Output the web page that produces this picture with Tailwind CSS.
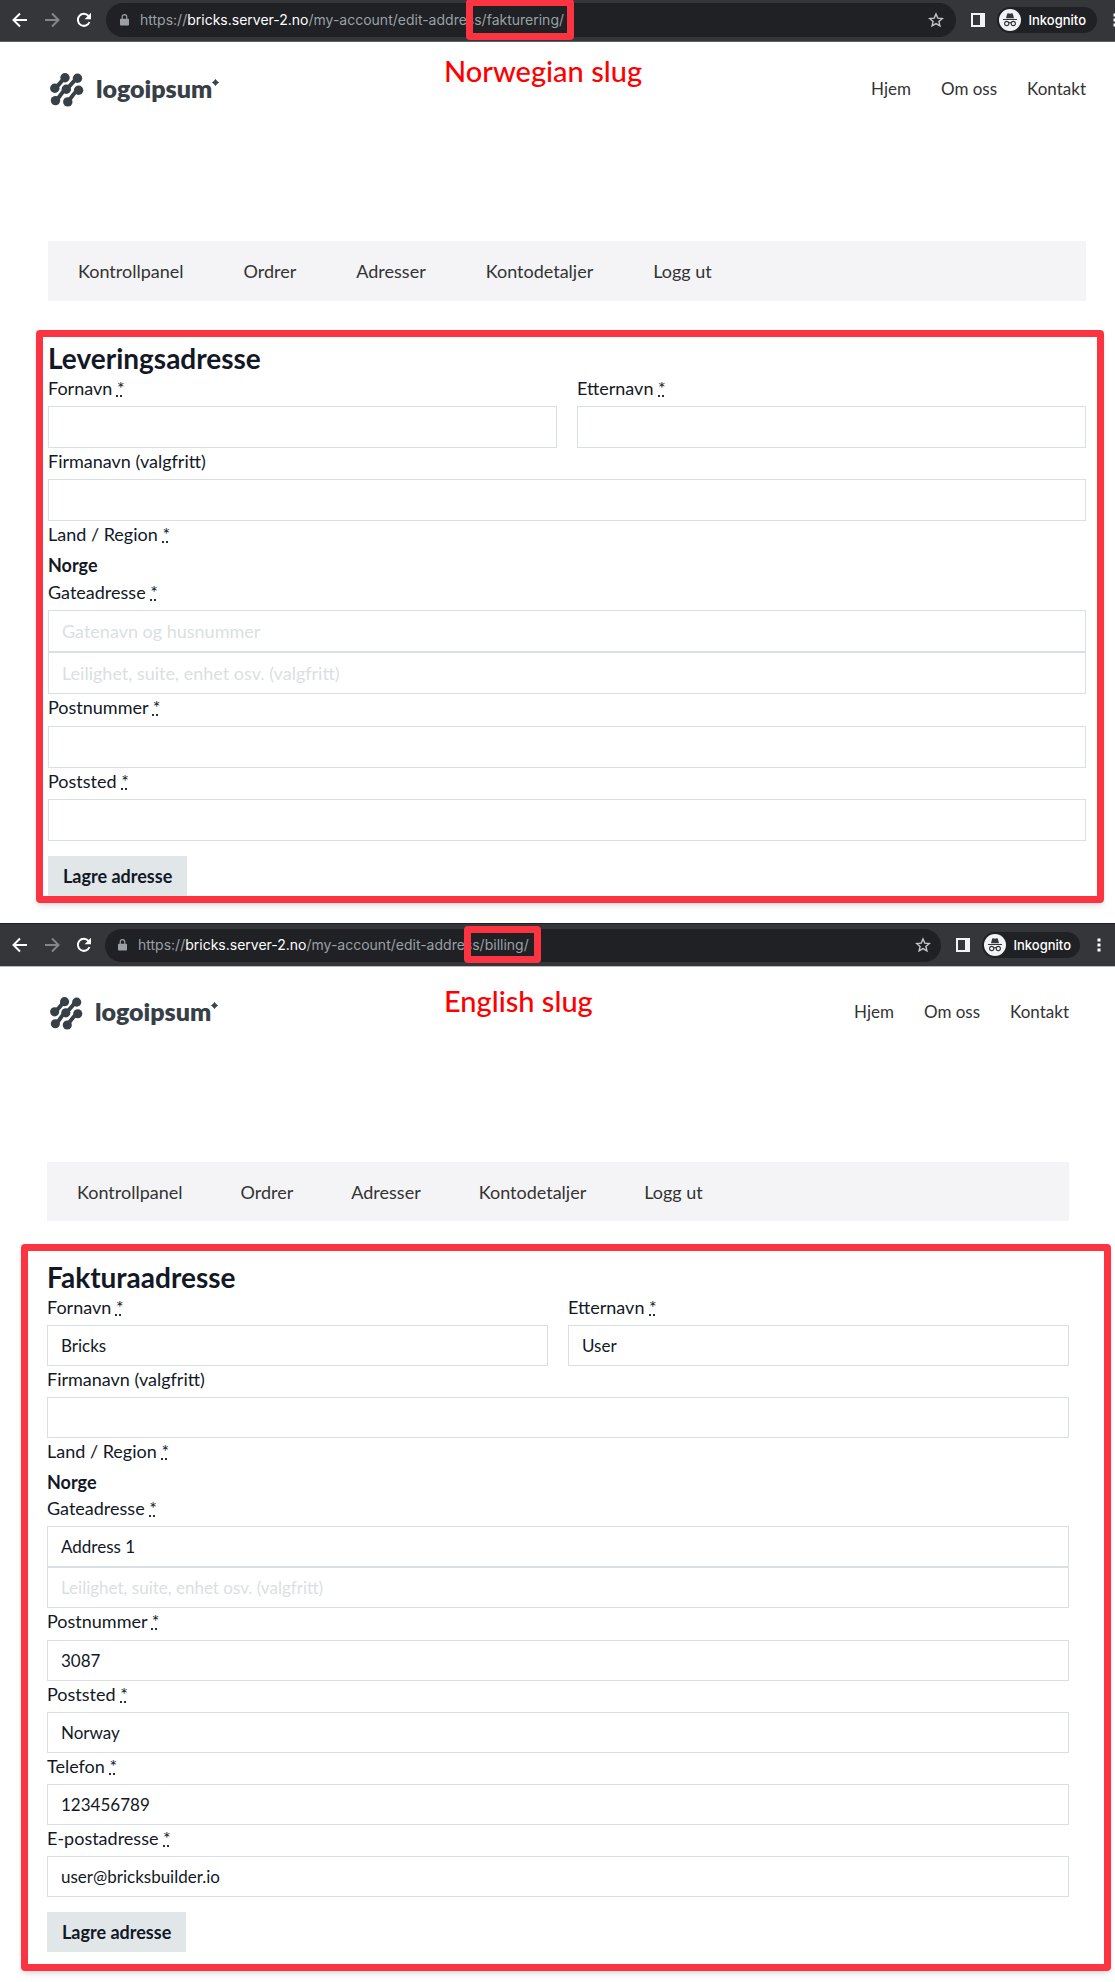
<!DOCTYPE html>
<html lang="nb">
  <head>
    <meta charset="utf-8" />
    <meta name="viewport" content="width=device-width, initial-scale=1.0" />
    <title>Edit address slugs</title>
    <script src="https://cdn.jsdelivr.net/npm/@tailwindcss/browser@4"></script>
  </head>
  <body class="overflow-x-hidden bg-white font-[Lato,sans-serif] text-[17px] leading-6 text-[#121826]">
    <!-- Shared icons -->
    <svg class="hidden">
      <symbol id="back" viewBox="0 0 16 16"><path d="M15 8H2M8 1.5 1.5 8 8 14.5" fill="none" stroke="currentColor" stroke-width="2" /></symbol>
      <symbol id="forward" viewBox="0 0 16 16"><path d="M1 8h13M8 1.5 14.500 8 8 14.500" fill="none" stroke="currentColor" stroke-width="2" /></symbol>
      <symbol id="reload" viewBox="0 0 16 16"><path d="M13.500 10A6 6 0 1 1 12.500 4" fill="none" stroke="currentColor" stroke-width="2" /><path d="M15 .8v6.400H8.600z" fill="currentColor" /></symbol>
      <symbol id="lock" viewBox="0 0 10 14"><path d="M1 5.500h8a1 1 0 0 1 1 1V12a1 1 0 0 1-1 1H1a1 1 0 0 1-1-1V6.500a1 1 0 0 1 1-1z" fill="currentColor" /><path d="M2.500 6V3.500a2.500 2.500 0 0 1 5 0V6" fill="none" stroke="currentColor" stroke-width="1.300" /></symbol>
      <symbol id="star" viewBox="0 0 16 16"><path d="m8 2 1.800 4.100 4.500.4-3.400 3 1 4.400L8 11.600l-3.900 2.300 1-4.400-3.400-3 4.500-.4z" fill="none" stroke="currentColor" stroke-width="1.400" /></symbol>
      <symbol id="panel" viewBox="0 0 14 14"><path fill-rule="evenodd" d="M0 0h14v14H0zM2 2v10h7V2z" fill="currentColor" /></symbol>
      <symbol id="incognito" viewBox="0 0 22 22">
        <circle cx="11" cy="11" r="11" fill="#f1f3f4" />
        <path d="M7 9.300 8.100 5q.3-.9 1.200-.7l1.700.4 1.700-.4q.9-.2 1.200.7L15 9.300z" fill="#35363a" />
        <path d="M4 10.500h14M9.700 14q1.300-.8 2.600 0" fill="none" stroke="#35363a" stroke-width="1.100" />
        <circle cx="7.700" cy="14.500" r="2.100" fill="none" stroke="#35363a" stroke-width="1.100" />
        <circle cx="14.300" cy="14.500" r="2.100" fill="none" stroke="#35363a" stroke-width="1.100" />
      </symbol>
      <symbol id="dots" viewBox="0 0 4 14"><path d="M.5.500h3v3h-3zM.5 5.500h3v3h-3zM.5 10.500h3v3h-3z" fill="currentColor" /></symbol>
      <symbol id="logo" viewBox="0 0 34 34">
        <path d="M14.700 4.800C11 8 9 13 4.800 15M27 5.300C23 8 20 14 16 16c-4 2-6 9-10.500 11.500M28.500 17c-5 2-7 9-11 11.500" fill="none" stroke="currentColor" stroke-width="4" />
        <g fill="currentColor">
          <circle cx="15" cy="4.800" r="4.700" /><circle cx="27.500" cy="5.300" r="4.700" />
          <circle cx="4.800" cy="15.300" r="4.700" /><circle cx="16.300" cy="16.300" r="4.700" /><circle cx="28.600" cy="17.200" r="4.700" />
          <circle cx="5.500" cy="27.600" r="4.700" /><circle cx="17.800" cy="28.900" r="4.700" />
        </g>
      </symbol>
      <symbol id="spark" viewBox="0 0 8 8"><path d="M4 .5Q5 3 7.500 4 5 5 4 7.500 3 5 .5 4 3 3 4 .5z" fill="currentColor" stroke="currentColor" /></symbol>
    </svg>

    <!-- Norwegian slug -->
    <section class="pb-5">
      <div class="flex h-[42px] items-center overflow-hidden border-b border-[#5f6063] bg-[#35363a] pb-[2px] pl-3 font-[Inter,sans-serif] text-white">
        <button aria-label="Back" class="mr-4"><svg class="size-4"><use href="#back" /></svg></button>
        <button aria-label="Forward" class="mr-4 text-[#85868a]"><svg class="size-4"><use href="#forward" /></svg></button>
        <button aria-label="Reload" class="mr-[14px]"><svg class="size-4"><use href="#reload" /></svg></button>
        <div class="flex h-[34px] grow items-center rounded-full bg-[#202124] pr-3 pl-[14px] text-sm text-[#9aa0a6]">
          <svg class="mr-[11px] h-[14px] w-[9px]"><use href="#lock" /></svg>
          <span>https://<span class="text-white">bricks.server-2.no</span>/my-account/edit-addres<span class="relative">s/fakturering/<span class="absolute -top-3 -right-[10px] -bottom-3 -left-2 rounded-sm border-[7px] border-[#fc3441]"></span></span></span>
          <button aria-label="Bookmark" class="ml-auto text-[#c4c7ca]"><svg class="size-4"><use href="#star" /></svg></button>
        </div>
        <button aria-label="Side panel" class="ml-[15px] text-[#f1f3f4]"><svg class="size-[14px]"><use href="#panel" /></svg></button>
        <button class="ml-3 flex h-[26px] items-center gap-2 rounded-full bg-[#202124] pr-[11px] pl-[2px] text-[13px] font-medium"><svg class="size-[22px]"><use href="#incognito" /></svg>Inkognito</button>
        <button aria-label="Menu" class="-mr-[2px] ml-4"><svg class="h-[14px] w-1"><use href="#dots" /></svg></button>
      </div>

      <header class="relative flex h-[199px] items-start justify-between pt-[31px] pr-[29px] pl-[50px] text-[#333]">
        <a href="#" class="flex items-center text-[#374047]">
          <svg class="mr-3 size-[34px]"><use href="#logo" /></svg>
          <span class="mb-1 text-[25px] leading-[30px] font-extrabold">logoipsum</span>
          <svg class="mb-4 size-[7px]"><use href="#spark" /></svg>
        </a>
        <p class="absolute top-[11px] left-[444px] text-[29px] leading-9 font-medium text-[#ff0000]">Norwegian slug</p>
        <nav class="flex gap-[30px] pt-1">
          <a href="#">Hjem</a>
          <a href="#">Om oss</a>
          <a href="#">Kontakt</a>
        </nav>
      </header>

      <nav class="mr-[29px] ml-12 flex h-[60px] items-center gap-[60px] bg-[#f4f4f6] px-[30px] text-lg text-[#333]">
        <a href="#">Kontrollpanel</a>
        <a href="#">Ordrer</a>
        <a href="#">Adresser</a>
        <a href="#">Kontodetaljer</a>
        <a href="#">Logg ut</a>
      </nav>

      <form class="mt-[29px] mr-[11px] ml-9 rounded-sm border-[7px] border-[#fc3441] pt-1 pr-[11px] pl-[5px] text-lg leading-[26px] shadow-md">
        <h2 class="text-[28px] leading-[34px] font-bold">Leveringsadresse</h2>
        <div class="grid grid-cols-2 gap-5">
          <div>
            <label for="s-first" class="block h-[31px]">Fornavn <abbr title="påkrevd">*</abbr></label>
            <input id="s-first" type="text" class="block h-[42px] w-full border border-[#dadfe1] px-[13px]" />
          </div>
          <div>
            <label for="s-last" class="block h-[31px]">Etternavn <abbr title="påkrevd">*</abbr></label>
            <input id="s-last" type="text" class="block h-[42px] w-full border border-[#dadfe1] px-[13px]" />
          </div>
        </div>
        <label for="s-company" class="block h-[31px]">Firmanavn (valgfritt)</label>
        <input id="s-company" type="text" class="block h-[42px] w-full border border-[#dadfe1] px-[13px]" />
        <p class="h-[31px]">Land / Region <abbr title="påkrevd">*</abbr></p>
        <strong class="block h-[27px]">Norge</strong>
        <label for="s-street" class="block h-[31px]">Gateadresse <abbr title="påkrevd">*</abbr></label>
        <input id="s-street" type="text" placeholder="Gatenavn og husnummer" class="block h-[42px] w-full border border-[#dadfe1] px-[13px] placeholder:text-[#dadfe1]" />
        <input type="text" aria-label="Leilighet" placeholder="Leilighet, suite, enhet osv. (valgfritt)" class="block h-[42px] w-full border border-[#dadfe1] px-[13px] placeholder:text-[#dadfe1]" />
        <label for="s-zip" class="block h-8">Postnummer <abbr title="påkrevd">*</abbr></label>
        <input id="s-zip" type="text" class="block h-[42px] w-full border border-[#dadfe1] px-[13px]" />
        <label for="s-city" class="block h-[31px]">Poststed <abbr title="påkrevd">*</abbr></label>
        <input id="s-city" type="text" class="block h-[42px] w-full border border-[#dadfe1] px-[13px]" />
        <button type="button" class="mt-[15px] block h-10 bg-[#e1e6e9] px-[15px] font-bold">Lagre adresse</button>
      </form>
    </section>

    <!-- English slug -->
    <section class="pb-3">
      <div class="flex h-11 items-center overflow-hidden border-t border-b border-t-[#202124] border-b-[#b9babc] bg-[#35363a] pr-[14px] pl-3 font-[Inter,sans-serif] text-white">
        <button aria-label="Back" class="mr-4"><svg class="size-4"><use href="#back" /></svg></button>
        <button aria-label="Forward" class="mr-4 text-[#85868a]"><svg class="size-4"><use href="#forward" /></svg></button>
        <button aria-label="Reload" class="mr-[13px]"><svg class="size-4"><use href="#reload" /></svg></button>
        <div class="flex h-[33px] grow items-center rounded-full bg-[#202124] pr-[10px] pl-[13px] text-sm text-[#9aa0a6]">
          <svg class="mr-[11px] h-[14px] w-[9px]"><use href="#lock" /></svg>
          <span>https://<span class="text-white">bricks.server-2.no</span>/my-account/edit-addres<span class="relative">s/billing/<span class="absolute -top-[10px] -right-3 -bottom-[10px] -left-2 rounded-sm border-[7px] border-[#fc3441]"></span></span></span>
          <button aria-label="Bookmark" class="ml-auto text-[#c4c7ca]"><svg class="size-4"><use href="#star" /></svg></button>
        </div>
        <button aria-label="Side panel" class="ml-[15px] text-[#f1f3f4]"><svg class="size-[14px]"><use href="#panel" /></svg></button>
        <button class="ml-3 flex h-[26px] items-center gap-2 rounded-full bg-[#202124] pr-[9px] pl-[2px] text-[13px] font-medium"><svg class="size-[22px]"><use href="#incognito" /></svg>Inkognito</button>
        <button aria-label="Menu" class="ml-[17px]"><svg class="h-[14px] w-1"><use href="#dots" /></svg></button>
      </div>

      <header class="relative flex h-[195px] items-start justify-between pt-[29px] pr-[46px] pl-[50px] text-[#333]">
        <a href="#" class="flex items-center text-[#374047]">
          <svg class="mr-3 size-[33px]"><use href="#logo" /></svg>
          <span class="mb-1 text-[25px] leading-[30px] font-extrabold">logoipsum</span>
          <svg class="mb-4 size-[7px]"><use href="#spark" /></svg>
        </a>
        <p class="absolute top-4 left-[444px] text-[29px] leading-9 font-medium text-[#ff0000]">English slug</p>
        <nav class="flex gap-[30px] pt-1">
          <a href="#">Hjem</a>
          <a href="#">Om oss</a>
          <a href="#">Kontakt</a>
        </nav>
      </header>

      <nav class="mr-[46px] ml-[47px] flex h-[59px] items-center gap-[58px] bg-[#f4f4f6] px-[30px] text-lg text-[#333]">
        <a href="#">Kontrollpanel</a>
        <a href="#">Ordrer</a>
        <a href="#">Adresser</a>
        <a href="#">Kontodetaljer</a>
        <a href="#">Logg ut</a>
      </nav>

      <form class="mt-[23px] mr-1 ml-[21px] rounded-sm border-[7px] border-[#fc3441] pt-[9px] pr-[35px] pb-3 pl-[19px] text-lg leading-[26px] shadow-md">
        <h2 class="text-[28px] leading-[34px] font-bold">Fakturaadresse</h2>
        <div class="grid grid-cols-2 gap-5">
          <div>
            <label for="b-first" class="block h-[31px]">Fornavn <abbr title="påkrevd">*</abbr></label>
            <input id="b-first" type="text" value="Bricks" class="block h-[41px] w-full border border-[#dadfe1] px-[13px] text-[17px]" />
          </div>
          <div>
            <label for="b-last" class="block h-[31px]">Etternavn <abbr title="påkrevd">*</abbr></label>
            <input id="b-last" type="text" value="User" class="block h-[41px] w-full border border-[#dadfe1] px-[13px] text-[17px]" />
          </div>
        </div>
        <label for="b-company" class="block h-[31px]">Firmanavn (valgfritt)</label>
        <input id="b-company" type="text" class="block h-[41px] w-full border border-[#dadfe1] px-[13px] text-[17px]" />
        <p class="h-[31px]">Land / Region <abbr title="påkrevd">*</abbr></p>
        <strong class="block h-[26px]">Norge</strong>
        <label for="b-street" class="block h-[31px]">Gateadresse <abbr title="påkrevd">*</abbr></label>
        <input id="b-street" type="text" value="Address 1" class="block h-[41px] w-full border border-[#dadfe1] px-[13px] text-[17px]" />
        <input type="text" aria-label="Leilighet" placeholder="Leilighet, suite, enhet osv. (valgfritt)" class="block h-[41px] w-full border border-[#dadfe1] px-[13px] text-[17px] placeholder:text-[#dadfe1]" />
        <label for="b-zip" class="block h-8">Postnummer <abbr title="påkrevd">*</abbr></label>
        <input id="b-zip" type="text" value="3087" class="block h-[41px] w-full border border-[#dadfe1] px-[13px] text-[17px]" />
        <label for="b-city" class="block h-[31px]">Poststed <abbr title="påkrevd">*</abbr></label>
        <input id="b-city" type="text" value="Norway" class="block h-[41px] w-full border border-[#dadfe1] px-[13px] text-[17px]" />
        <label for="b-phone" class="block h-[31px]">Telefon <abbr title="påkrevd">*</abbr></label>
        <input id="b-phone" type="tel" value="123456789" class="block h-[41px] w-full border border-[#dadfe1] px-[13px] text-[17px]" />
        <label for="b-email" class="block h-[31px]">E-postadresse <abbr title="påkrevd">*</abbr></label>
        <input id="b-email" type="email" value="user@bricksbuilder.io" class="block h-[41px] w-full border border-[#dadfe1] px-[13px] text-[17px]" />
        <button type="button" class="mt-[15px] block h-10 bg-[#e1e6e9] px-[15px] font-bold">Lagre adresse</button>
      </form>
    </section>
  </body>
</html>
